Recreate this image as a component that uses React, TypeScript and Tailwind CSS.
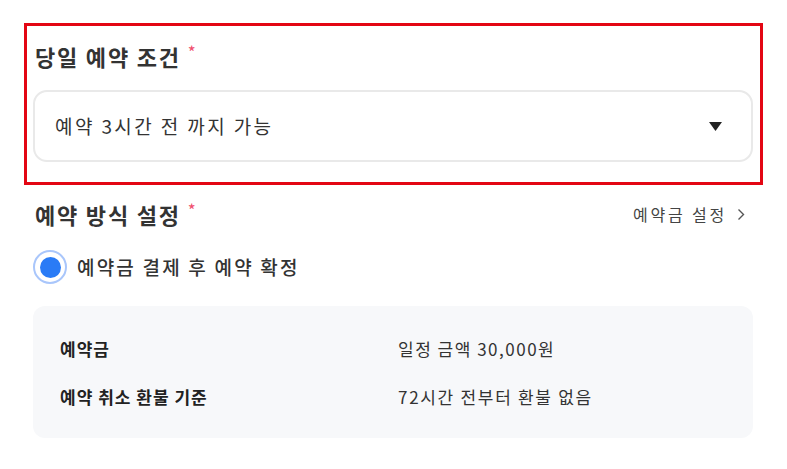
import React from "react";

const font = { fontFamily: '"Noto Sans CJK KR", "Noto Sans", sans-serif' };

export default function App() {
  return (
    <div
      className="w-[787px] h-[469px] bg-white pt-[23px] pl-[24px] text-[#222]"
      style={font}
    >
      <div className="w-[739px] border-[3px] border-[#e30613] pl-[6px] pr-[7px] pt-[15px] pb-[20px]">
        <div className="flex items-start h-[30px] pl-[2px] mb-[19px]">
          <span className="text-[22px] leading-[30px] font-semibold tracking-[1.8px] text-[#333]">
            당일 예약 조건
          </span>
          <span className="ml-[7px] mt-[1px] text-[17px] leading-[20px] text-[#f0506e]">*</span>
        </div>
        <div className="h-[72px] rounded-[14px] border-2 border-[#e9e9e9] flex items-center justify-between pl-[20px] pr-[29px]">
          <span className="text-[19px] tracking-[2.4px] text-[#333]">예약 3시간 전 까지 가능</span>
          <svg width="13" height="9" viewBox="0 0 13 9">
            <polygon points="0,0 13,0 6.5,9" fill="#222" />
          </svg>
        </div>
      </div>

      <div className="pl-[9px] w-[729px] mt-[14px]">
        <div className="flex items-center justify-between h-[30px]">
          <div className="flex items-start pl-[2px]">
            <span className="text-[22px] leading-[30px] font-semibold tracking-[1.8px] text-[#333]">
              예약 방식 설정
            </span>
            <span className="ml-[7px] mt-[1px] text-[17px] leading-[20px] text-[#f0506e]">*</span>
          </div>
          <div className="flex items-center gap-[10px] pr-[8px]">
            <span className="text-[16px] tracking-[2.8px] text-[#444]">예약금 설정</span>
            <svg width="8" height="13" viewBox="0 0 8 13">
              <polyline points="1.5,1.5 6.5,6.5 1.5,11.5" fill="none" stroke="#555" strokeWidth="1.4" />
            </svg>
          </div>
        </div>

        <div className="flex items-center mt-[21px] h-[34px]">
          <div className="w-[34px] h-[34px] rounded-full border-2 border-[#a9c6fb] flex items-center justify-center">
            <div className="w-[21px] h-[21px] rounded-full bg-[#2a7bf6]" />
          </div>
          <span className="ml-[10px] text-[19px] font-medium tracking-[2.2px] text-[#333]">
            예약금 결제 후 예약 확정
          </span>
        </div>

        <div className="mt-[22px] h-[132px] rounded-[12px] bg-[#f7f8fa] pt-[31px] pl-[27px] flex flex-col gap-[24px]">
          <div className="flex items-center h-[24px]">
            <span className="w-[338px] text-[17px] font-bold tracking-[1px] text-[#222]">예약금</span>
            <span className="text-[17px] tracking-[1.5px] text-[#333]">일정 금액 30,000원</span>
          </div>
          <div className="flex items-center h-[24px]">
            <span className="w-[338px] text-[17px] font-bold tracking-[1px] text-[#222]">예약 취소 환불 기준</span>
            <span className="text-[17px] tracking-[1.7px] text-[#333]">72시간 전부터 환불 없음</span>
          </div>
        </div>
      </div>
    </div>
  );
}
